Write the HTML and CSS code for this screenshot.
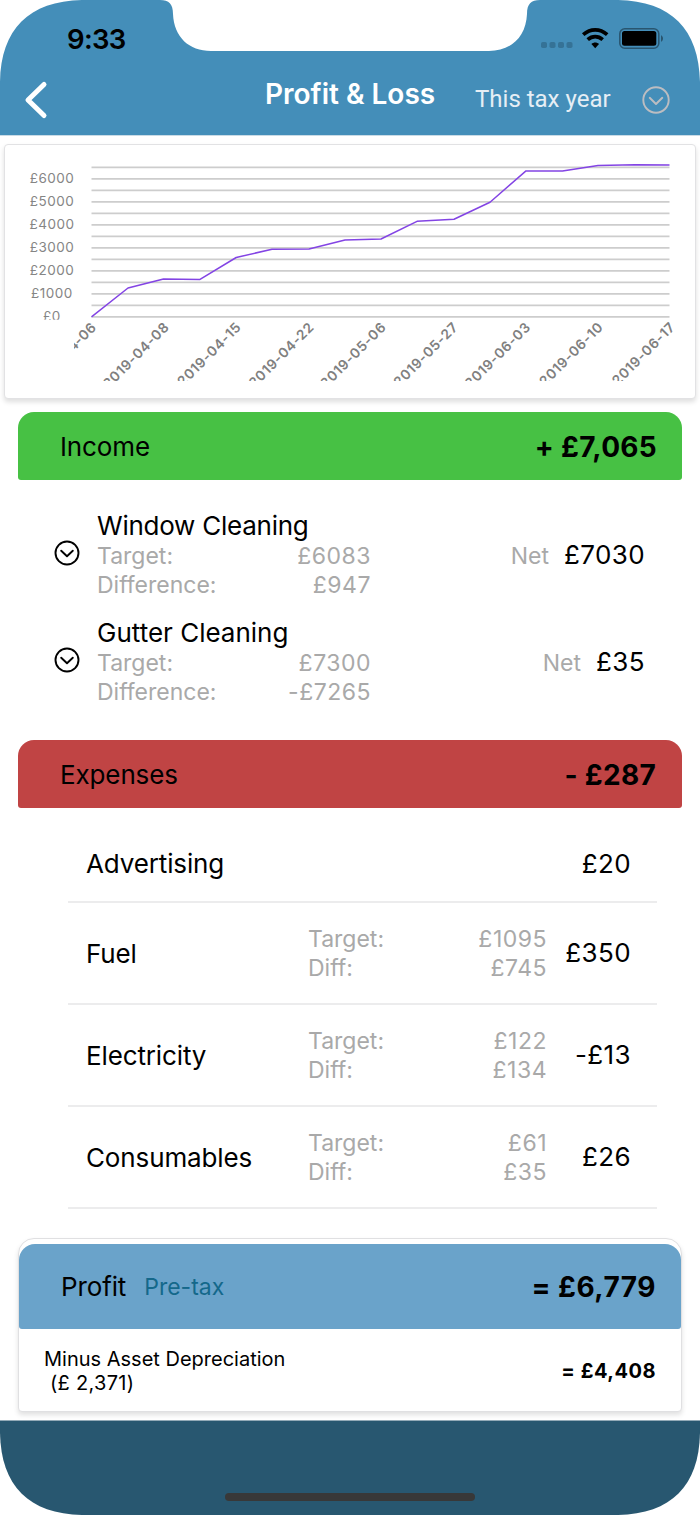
FILE: index.html
```html
<!DOCTYPE html>
<html lang="en">
<head>
<meta charset="utf-8">
<title>Profit &amp; Loss</title>
<link rel="stylesheet" href="styles.css">
</head>
<body>
<div class="screen">
  <header class="header">
    <svg class="backdrop" width="700" height="136" viewBox="0 0 700 136">
      <path fill="#c9dbe6" d="M0 134h700v2H0z"/>
      <path fill="#448eb9" d="M0 82C1 29 29 1 82 0H160C169 0 173 4 173 14C174 37 189 51 211 51H489C511 51 526 37 527 14C527 4 531 0 540 0H618C671 1 699 29 700 82V135H0Z"/>
    </svg>
    <div class="status">
      <span class="clock">9:33</span>
      <svg width="124" height="24" viewBox="0 0 124 24">
        <g fill="#357296"><rect x="1" y="15" width="6" height="6" rx="1.800"/><rect x="9.500" y="15" width="6" height="6" rx="1.800"/><rect x="18" y="15" width="6" height="6" rx="1.800"/><rect x="26.500" y="15" width="6" height="6" rx="1.800"/></g>
        <g fill="none" stroke="#000" stroke-width="3.700"><path d="M43.200 7.700C50.500 1.300 59.900 1.300 67.200 7.700"/><path d="M47.700 12.600C52.200 8.600 58.200 8.600 62.700 12.600"/></g>
        <path d="M51.400 17C53.700 15 56.700 15 59 17L55.200 21.200Z"/>
        <rect x="79.800" y="1.700" width="39" height="19.500" rx="5" fill="none" stroke="#29556f" stroke-width="1.500"/>
        <rect x="82" y="4" width="34.300" height="14.700" rx="2.500"/>
        <path fill="#29556f" d="M121 8.200C123.700 9.500 123.700 13.500 121 14.800Z"/>
      </svg>
    </div>
    <div class="nav">
      <svg class="back" width="26" height="42" viewBox="0 0 26 42"><path d="M22 5.500L6 21L22 36.500" fill="none" stroke="#fff" stroke-width="5" stroke-linecap="round" stroke-linejoin="round"/></svg>
      <h1 class="title">Profit &amp; Loss</h1>
      <span class="period">This tax year</span>
      <svg class="pick" width="28" height="28" viewBox="0 0 28 28" fill="none" stroke="#bcbdc1" stroke-width="1.900" stroke-linecap="round" stroke-linejoin="round"><circle cx="14" cy="14" r="12.700"/><path d="M7.700 11.800L14 18L20.300 11.800"/></svg>
    </div>
  </header>

  <section class="chart-card">
    <svg width="690" height="253" viewBox="5 145 690 253">
      <defs>
        <clipPath id="yclip"><rect x="20" y="160" width="60" height="159.800"/></clipPath>
        <clipPath id="xclip"><rect x="74" y="321.500" width="610" height="59.500"/></clipPath>
      </defs>
      <path class="gridline" d="M91.500 167.400H669.500M91.500 178.900H669.500M91.500 190.400H669.500M91.500 201.900H669.500M91.500 213.400H669.500M91.500 224.900H669.500M91.500 236.400H669.500M91.500 247.900H669.500M91.500 259.400H669.500M91.500 270.800H669.500M91.500 282.300H669.500M91.500 293.800H669.500M91.500 305.300H669.500M91.500 316.800H669.500"/>
      <g class="ylabels" clip-path="url(#yclip)">
        <text x="52" y="183">£6000</text><text x="52" y="206">£5000</text><text x="52" y="229">£4000</text><text x="52" y="252">£3000</text><text x="52" y="275">£2000</text><text x="52" y="298">£1000</text><text x="52" y="321">£0</text>
      </g>
      <g clip-path="url(#xclip)"><g class="xlabels">
        <text transform="translate(97.500 328) rotate(-45)">-06</text>
        <text transform="translate(80 345.500) rotate(-45)">4</text>
        <text transform="translate(170 328) rotate(-45)">2019-04-08</text>
        <text transform="translate(242 328) rotate(-45)">2019-04-15</text>
        <text transform="translate(315 328) rotate(-45)">2019-04-22</text>
        <text transform="translate(387 328) rotate(-45)">2019-05-06</text>
        <text transform="translate(459 328) rotate(-45)">2019-05-27</text>
        <text transform="translate(531.500 328) rotate(-45)">2019-06-03</text>
        <text transform="translate(604 328) rotate(-45)">2019-06-10</text>
        <text transform="translate(676 328) rotate(-45)">2019-06-17</text>
      </g></g>
      <polyline class="series" points="91.500,316.800 128,288 163.500,279 200,279.400 236.200,257.500 272,249.200 309,249.100 345,239.900 381,239 417,221.300 454,219.300 490,202.200 526,170.900 562.500,171 598,165.500 635,164.700 669.500,164.900"/>
    </svg>
  </section>

  <section class="bar income"><h2>Income</h2><strong>+ £7,065</strong></section>
  <ul class="earnings">
    <li class="earning">
      <svg class="toggle" width="26" height="26" viewBox="0 0 26 26"><circle cx="13" cy="13" r="11.500"/><path d="M7.200 10.700L13 16.300L18.800 10.700"/></svg>
      <div class="detail"><h3 class="long">Window Cleaning</h3><dl><dt>Target:</dt><dd>£6083</dd><dt>Difference:</dt><dd>£947</dd></dl></div>
      <span class="net">Net</span><span class="amount">£7030</span>
    </li>
    <li class="earning">
      <svg class="toggle" width="26" height="26" viewBox="0 0 26 26"><circle cx="13" cy="13" r="11.500"/><path d="M7.200 10.700L13 16.300L18.800 10.700"/></svg>
      <div class="detail"><h3>Gutter Cleaning</h3><dl><dt>Target:</dt><dd>£7300</dd><dt>Difference:</dt><dd>-£7265</dd></dl></div>
      <span class="net">Net</span><span class="amount">£35</span>
    </li>
  </ul>

  <section class="bar expenses"><h2>Expenses</h2><strong>- £287</strong></section>
  <ul class="costs">
    <li class="cost short"><h3>Advertising</h3><span class="amount">£20</span></li>
    <li class="cost"><h3>Fuel</h3><dl><dt>Target:</dt><dd>£1095</dd><dt>Diff:</dt><dd>£745</dd></dl><span class="amount">£350</span></li>
    <li class="cost"><h3>Electricity</h3><dl><dt>Target:</dt><dd>£122</dd><dt>Diff:</dt><dd>£134</dd></dl><span class="amount">-£13</span></li>
    <li class="cost"><h3>Consumables</h3><dl><dt>Target:</dt><dd>£61</dd><dt>Diff:</dt><dd>£35</dd></dl><span class="amount">£26</span></li>
  </ul>

  <section class="profit-card">
    <div class="profit"><h2>Profit</h2><span class="pretax">Pre-tax</span><strong>= £6,779</strong></div>
    <div class="depreciation"><p>Minus Asset Depreciation<br><span class="sum">(£ 2,371)</span></p><strong>= £4,408</strong></div>
  </section>

  <footer class="footer">
    <svg class="backdrop" width="700" height="95" viewBox="0 0 700 95"><path fill="#285770" d="M0 .5H700V13C699 66 671 94 618 95H82C29 94 1 66 0 13Z"/></svg>
    <span class="home"></span>
  </footer>
</div>
</body>
</html>
```

FILE: styles.css
```css
* { box-sizing: border-box; }
body, h1, h2, h3, p, ul, dl, dd { margin: 0; padding: 0; }
ul { list-style: none; }
svg { display: block; }
body { background: #fff; color: #000; font-family: Inter, "Liberation Sans", sans-serif; }
h1, h2, h3 { font-weight: 400; font-size: 26px; white-space: nowrap; }
h2, h3 { letter-spacing: -.13px; }

.screen { width: 700px; height: 1515px; display: flex; flex-direction: column; overflow: hidden; }

.header { position: relative; height: 135px; flex: none; }
.backdrop { position: absolute; left: 0; top: 0; z-index: -1; }
.status { display: flex; justify-content: space-between; align-items: flex-start; padding: 27px 36px 0 67px; height: 67px; }
.clock { font-size: 27.5px; font-weight: 600; line-height: 24px; letter-spacing: -0.7px; }
.nav { display: flex; align-items: flex-start; padding-left: 22px; }
.back { margin-top: 12px; }
.title { margin-left: 217px; margin-top: 10px; color: #fff; font-size: 28px; font-weight: 600; line-height: 34px; width: 210px; }
.period { color: #e6eef5; font-family: Roboto, sans-serif; font-size: 24px; line-height: 28px; margin-top: 18px; width: 167px; }
.pick { margin-top: 19px; }

.chart-card { margin: 9px 4px 0; height: 255px; flex: none; border: 1px solid #e2e2e4; border-radius: 4px; background: #fff; box-shadow: 0 3px 5px rgba(0, 0, 0, .13); }
.gridline { stroke: #cdcdcd; stroke-width: 1.7; }
.series { fill: none; stroke: #8344e4; stroke-width: 1.5; stroke-linejoin: round; }
.ylabels { font-size: 13.5px; letter-spacing: .5px; fill: #858585; text-anchor: middle; }
.xlabels { font-size: 13.7px; font-weight: 600; letter-spacing: .6px; fill: #808080; text-anchor: end; }

.bar { flex: none; height: 68px; margin: 13px 18px 0; padding: 1px 25px 0 42px; display: flex; align-items: center; justify-content: space-between; border-radius: 16px 16px 3px 3px; }
.bar strong, .profit strong { font-size: 28px; font-weight: 700; letter-spacing: .3px; }
.income { background: #47c144; }
.expenses { background: #c04444; margin-top: 0; }
.expenses strong { padding-right: 1px; }

.earnings { flex: none; height: 260px; padding: 30px 55px 0 54px; }
.earning { display: flex; align-items: flex-start; height: 107px; }
.toggle { margin-top: 30px; fill: none; stroke: #000; stroke-width: 1.9; stroke-linecap: round; stroke-linejoin: round; }
.detail { margin-left: 17px; width: 274px; }
.detail h3 { line-height: 32px; letter-spacing: 0; }
.detail .long { letter-spacing: -.24px; }
dl { display: grid; grid-template-columns: auto auto; justify-content: space-between; font-size: 23px; line-height: 28.6px; color: #a9a9a9; }
dt { letter-spacing: 0; }
dd { text-align: right; letter-spacing: .5px; }
.net { margin-left: auto; margin-top: 32px; font-size: 23px; line-height: 28px; color: #a9a9a9; }
.earning .amount { margin-left: 15px; margin-top: 30px; }
.amount { font-size: 26px; line-height: 30px; letter-spacing: .4px; }

.costs { flex: none; margin: 18px 43px 0 68px; }
.cost { display: grid; grid-template-columns: 222px 239px 1fr; align-items: center; height: 102px; padding: 0 26px 0 18px; border-bottom: 2px solid #ececed; }
.cost.short { height: 77px; }
.cost.short .amount { grid-column: 3; }
.cost .amount { text-align: right; }
.cost dl { padding-top: 1px; }

.profit-card { flex: none; height: 174px; margin: 29px 18px 0; padding-top: 5px; border: 1px solid #e0e0e2; border-radius: 16px 16px 4px 4px; background: #fff; box-shadow: 0 3px 5px rgba(0, 0, 0, .12); }
.profit { display: flex; align-items: center; height: 85px; padding: 0 25px 0 42px; background: #6aa3ca; border-radius: 16px 16px 3px 3px; }
.profit strong, .depreciation strong { margin-left: auto; letter-spacing: .5px; }
.pretax { margin-left: 18px; font-size: 23px; color: #14688a; }
.depreciation { display: flex; align-items: center; height: 83px; padding: 1px 25px 0 25px; font-size: 20px; line-height: 24.3px; }
.sum { margin-left: 6px; letter-spacing: .3px; }

.footer { position: relative; flex: none; margin-top: 8px; height: 95px; display: flex; justify-content: center; align-items: flex-end; padding-bottom: 14px; }
.home { width: 250px; height: 8px; border-radius: 4px; background: #383838; }
```
